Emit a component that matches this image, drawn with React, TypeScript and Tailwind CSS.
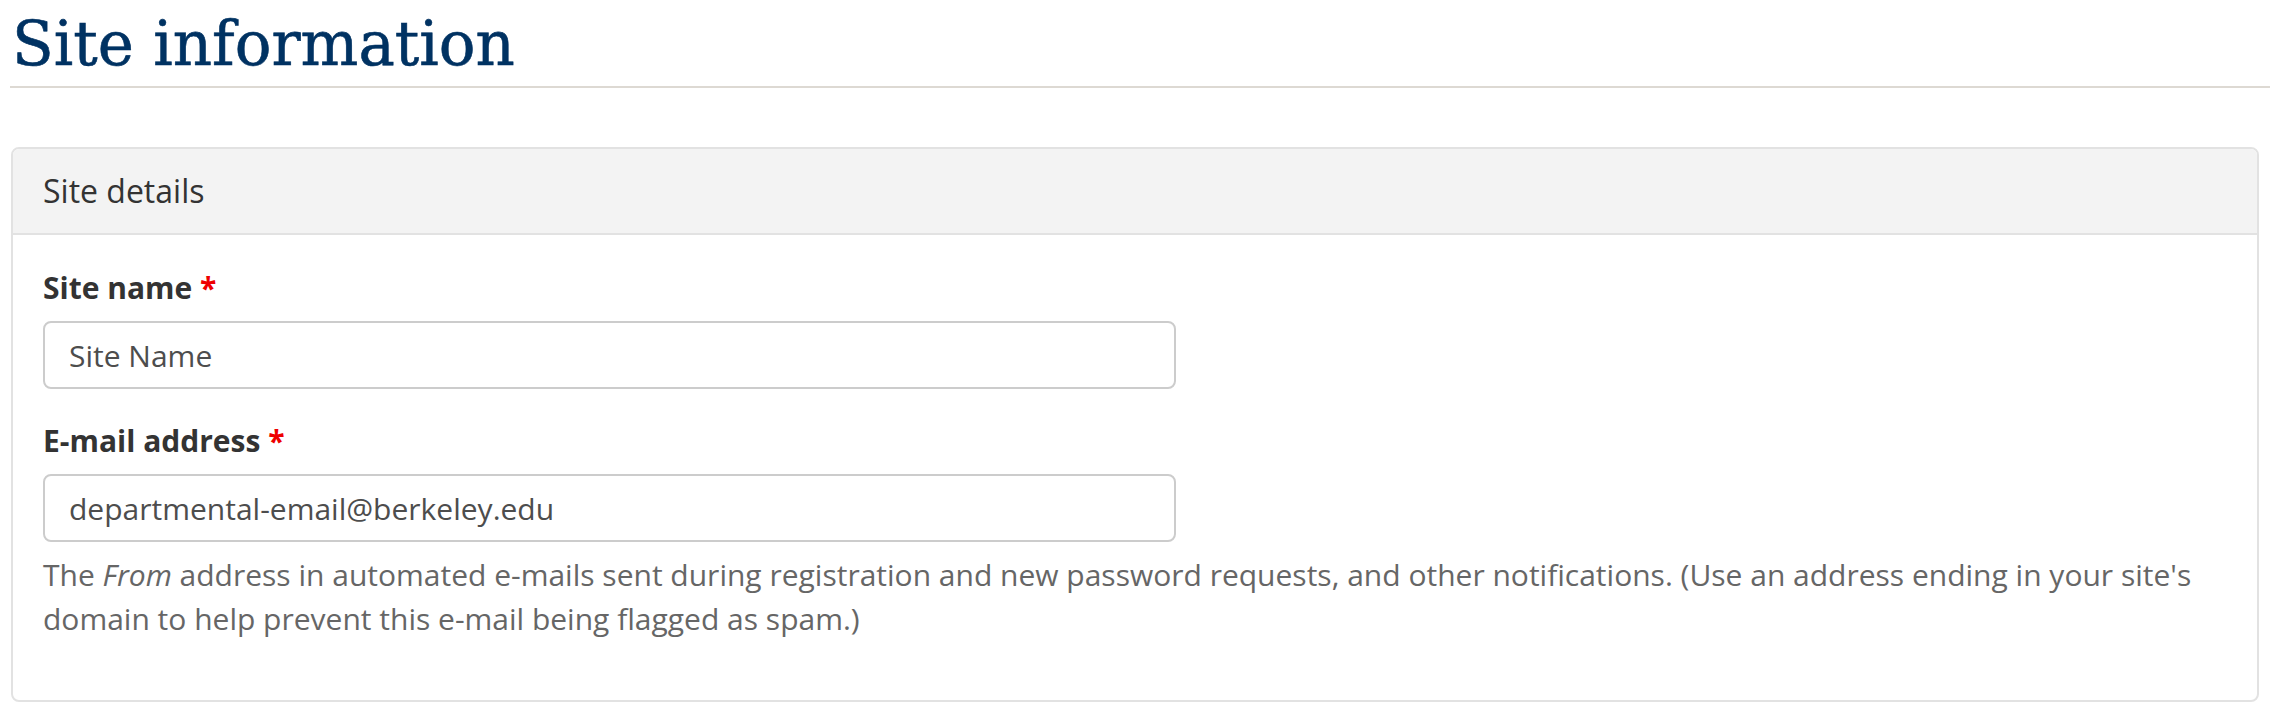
import React from "react";

function Field({ label, value }: { label: string; value: string }) {
  return (
    <div className="flex flex-col">
      <label className="text-[30px] leading-[40px] font-bold text-[#333333] mb-[13px]">
        {label} <span className="text-[#ee0000]">*</span>
      </label>
      <input
        readOnly
        value={value}
        className="w-[1133px] h-[68px] border-2 border-[#cccccc] rounded-lg pl-[24px] pr-4 text-[30px] text-[#4d4d4d] bg-white outline-none font-['Open_Sans',sans-serif]"
      />
    </div>
  );
}

export default function App() {
  return (
    <div className="w-[2280px] h-[718px] bg-white font-['Open_Sans',sans-serif] pl-[10px] pr-[10px] pt-[13px] overflow-hidden">
      <h1 className="font-['DejaVu_Serif',serif] text-[61px] leading-[61px] text-[#003262] pl-[2px] [-webkit-text-stroke:0.6px_#003262]">
        Site information
      </h1>
      <div className="mt-[12px] h-[2px] bg-[#ddd9d3]" />
      <div className="mt-[59px] ml-[1px] w-[2248px] border-2 border-[#e2e2e2] rounded-lg overflow-hidden">
        <div className="bg-[#f3f3f3] border-b-2 border-[#e2e2e2] px-[30px] py-[20px]">
          <div className="text-[32px] leading-[44px] text-[#333333]">Site details</div>
        </div>
        <div className="px-[30px] pt-[33px] pb-[59px] flex flex-col">
          <Field label="Site name" value="Site Name" />
          <div className="mt-[32px]">
            <Field label="E-mail address" value="departmental-email@berkeley.edu" />
          </div>
          <p className="mt-[11px] text-[30px] leading-[44px] text-[#666666]">
            The <em>From</em> address in automated e-mails sent during registration and new password
            requests, and other notifications. (Use an address ending in your site's domain to help
            prevent this e-mail being flagged as spam.)
          </p>
        </div>
      </div>
    </div>
  );
}
